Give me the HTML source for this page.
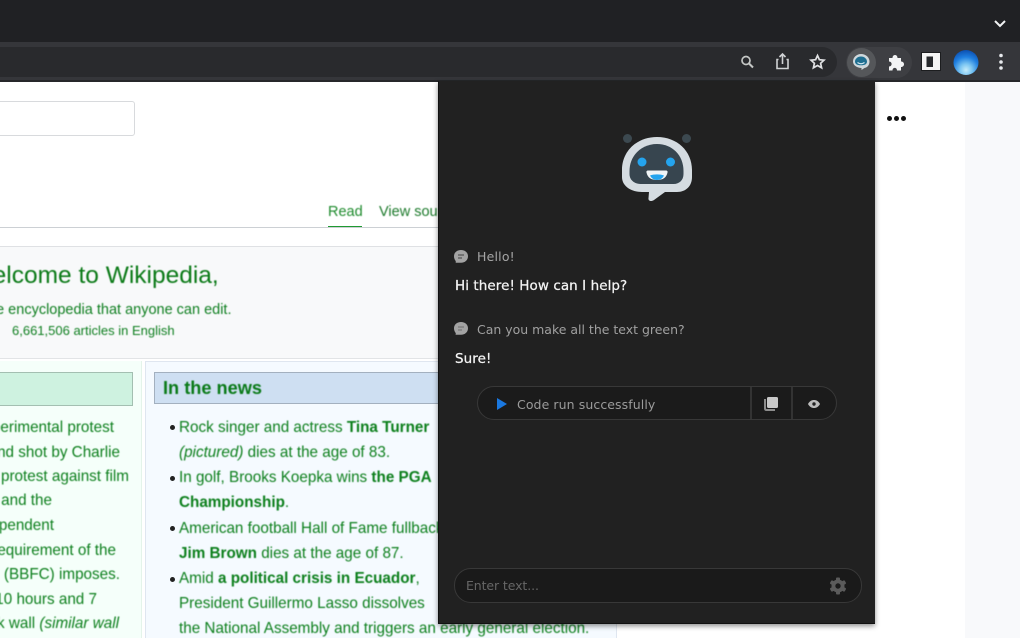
<!DOCTYPE html>
<html><head><meta charset="utf-8">
<style>
html,body{margin:0;padding:0;width:1020px;height:638px;overflow:hidden;background:#fff}
#r{position:relative;width:1020px;height:638px;overflow:hidden;font-family:"Liberation Sans",sans-serif}
.a{position:absolute}
.t{position:absolute;white-space:nowrap;color:#0c7f1c;font-size:14.5px;line-height:18px;filter:blur(.4px)}
.n{font-size:15.25px}
.p{position:absolute;white-space:nowrap;font-family:"DejaVu Sans",sans-serif;filter:blur(.35px)}
b{font-weight:bold}
</style></head><body><div id="r">
<!-- browser chrome -->
<div class="a" style="left:0;top:0;width:1020px;height:42px;background:#202124"></div>
<div class="a" style="left:0;top:42px;width:1020px;height:39px;background:#35363a"></div>
<div class="a" style="left:0;top:47px;width:837px;height:30px;background:#292a2d;border-radius:0 15px 15px 0"></div>
<div class="a" style="left:846px;top:47px;width:66px;height:31px;background:#3e3f43;border-radius:16px"></div>
<div class="a" style="left:847px;top:48px;width:29px;height:29px;background:#55575a;border-radius:50%"></div>
<svg class="a" style="left:0;top:0" width="1020" height="82" viewBox="0 0 1020 82">
<path d="M995 21l5 5 5-5" fill="none" stroke="#f1f3f4" stroke-width="2"/>
<circle cx="746" cy="60.500" r="4" fill="none" stroke="#c4c7c5" stroke-width="1.700"/>
<path d="M749 63.500l4 4" stroke="#c4c7c5" stroke-width="2"/>
<path d="M778.500 59.500h-1.500v9h11v-9h-1.500M782.500 64V54.500M779.500 57l3-3 3 3" fill="none" stroke="#d0d2d4" stroke-width="1.600"/>
<path d="M817.500 55.500l1.900 4.200 4.600.5-3.400 3.100 1 4.500-4.100-2.300-4.100 2.300 1-4.500-3.400-3.100 4.600-.5z" fill="none" stroke="#e0e1e3" stroke-width="1.700"/>
<path d="M861 54c5 0 8.500 3.500 8.500 7.500s-2.500 6-5 6.500l-3 2v-2c-4 0-8.500-2.500-8.500-6.500s3.500-7.500 8-7.500z" fill="#cfd8dc"/>
<path d="M861 56.500c3.500 0 6 2.500 6 5 0 2.500-2 3.800-6 3.800s-6-1.300-6-3.800c0-2.500 2.500-5 6-5z" fill="#1f6f91"/>
<path d="M857.500 62.500q3.500 2.500 7 0" stroke="#cfe6f0" stroke-width="1.200" fill="none"/>
<path d="M889 58h3.500c0-4 5-4 5 0h3.500v3.500c4 0 4 5.500 0 5.500v3.500h-4c0-3.500-4.500-3.500-4.500 0h-3.500v-4c3.500 0 3.500-5 0-5z" fill="#f3f4f5"/>
<rect x="921" y="52" width="20" height="19" fill="#1c1d1f"/>
<rect x="922" y="53" width="18" height="17" fill="#f4f4f4"/>
<rect x="926.500" y="56.500" width="6.500" height="10.500" fill="#26282b"/>
<defs><radialGradient id="g" cx=".5" cy=".8" r=".8"><stop offset="0" stop-color="#c5ecfa"/><stop offset=".3" stop-color="#7cc6f2"/><stop offset=".65" stop-color="#1f7fe0"/><stop offset="1" stop-color="#0c4fb0"/></radialGradient></defs>
<circle cx="966" cy="62.500" r="12.500" fill="url(#g)"/>
<circle cx="1001" cy="55.500" r="1.800" fill="#e8eaed"/><circle cx="1001" cy="62" r="1.800" fill="#e8eaed"/><circle cx="1001" cy="68" r="1.800" fill="#e8eaed"/>
</svg>
<div class="a" style="left:0;top:80px;width:1020px;height:2px;background:#26272a"></div>

<!-- wikipedia page -->
<div class="a" style="left:965px;top:82px;width:55px;height:556px;background:#f8f9fb"></div>
<div class="a" style="left:-10px;top:101px;width:143px;height:33px;border:1.500px solid #d8dadd;border-radius:3px;background:#fff"></div>
<div class="t" style="left:328px;top:203px;color:#1d8a2c">Read</div>
<div class="a" style="left:328px;top:226px;width:34px;height:2px;background:#1f9a32"></div>
<div class="t" style="left:379px;top:203px;color:#1d7a2c">View source</div>
<div class="a" style="left:0;top:227px;width:440px;height:1px;background:#ccd0d4"></div>
<div class="a" style="left:0;top:246px;width:617px;height:111px;background:#f8f9fa;border-top:1px solid #dfe1e4;border-bottom:1px solid #e2e4e6"></div>
<div class="t" style="left:-30px;top:261px;font-size:24.500px;line-height:30px;color:#0b7a17">Welcome to Wikipedia,</div>
<div class="t" style="left:-16px;top:301px;color:#0f7f20">the encyclopedia that anyone can edit.</div>
<div class="t" style="left:12px;top:322px;font-size:13px;color:#0f7f20">6,661,506 articles in English</div>

<div class="a" style="left:0;top:361px;width:141px;height:277px;background:#f5fffa;border-right:1px solid #e4f4ea"></div>
<div class="a" style="left:-5px;top:372px;width:136px;height:32px;background:#cef2e0;border:1px solid #a3bfb1"></div>
<div class="a" style="left:145px;top:361px;width:470px;height:277px;background:#f5faff;border:1px solid #dfe6f0;border-bottom:0"></div>
<div class="a" style="left:154px;top:372px;width:300px;height:32px;background:#cedff2;border:1px solid #a3b0bf;box-sizing:border-box"></div>
<div class="t" style="left:163px;top:376px;font-size:18.200px;line-height:24px;font-weight:bold;color:#0a7a18">In the news</div>

<div class="t n" style="right:906px;top:419px">experimental protest</div>
<div class="t n" style="right:900px;top:444px">and shot by Charlie</div>
<div class="t n" style="right:891px;top:468px">protest against film</div>
<div class="t n" style="right:968px;top:492px">and the</div>
<div class="t n" style="right:966px;top:517px">Independent</div>
<div class="t n" style="right:904px;top:542px">requirement of the</div>
<div class="t n" style="right:900px;top:566px">(BBFC) imposes.</div>
<div class="t n" style="right:923px;top:591px">10 hours and 7</div>
<div class="t n" style="right:901px;top:615px">brick wall <i>(similar wall</i></div>

<div class="a" style="left:170px;top:425px;width:5px;height:5px;border-radius:50%;background:#222"></div>
<div class="a" style="left:170px;top:476px;width:5px;height:5px;border-radius:50%;background:#222"></div>
<div class="a" style="left:170px;top:526px;width:5px;height:5px;border-radius:50%;background:#222"></div>
<div class="a" style="left:170px;top:577px;width:5px;height:5px;border-radius:50%;background:#222"></div>
<div class="t n" style="left:179px;top:419px">Rock singer and actress <b>Tina Turner</b></div>
<div class="t n" style="left:179px;top:444px"><i>(pictured)</i> dies at the age of 83.</div>
<div class="t n" style="left:179px;top:469px">In golf, Brooks Koepka wins <b>the PGA</b></div>
<div class="t n" style="left:179px;top:494px"><b>Championship</b>.</div>
<div class="t n" style="left:179px;top:520px">American football Hall of Fame fullback</div>
<div class="t n" style="left:179px;top:545px"><b>Jim Brown</b> dies at the age of 87.</div>
<div class="t n" style="left:179px;top:570px">Amid <b>a political crisis in Ecuador</b>,</div>
<div class="t n" style="left:179px;top:595px">President Guillermo Lasso dissolves</div>
<div class="t n" style="left:179px;top:620px">the National Assembly and triggers an early general election.</div>
<div class="a" style="left:887px;top:116px;width:5px;height:5px;border-radius:50%;background:#111;box-shadow:7px 0 #111,14px 0 #111"></div>

<!-- popup -->
<div class="a" style="left:438px;top:81px;width:437px;height:543px;background:#212121;box-shadow:0 2px 5px rgba(0,0,0,.45);border-left:1px solid #111;border-bottom:1px solid #111;box-sizing:border-box"></div>
<svg class="a" style="left:610px;top:125px" width="95" height="85" viewBox="610 125 95 85">
<circle cx="627.500" cy="138.500" r="4.500" fill="#3c4950"/>
<circle cx="686.500" cy="138.500" r="4.500" fill="#3c4950"/>
<path d="M657 137c20 0 35 14 35 33v7c0 9-6 15-15 15h-12l-11 8c-3 2-6 1-5.500-2l.5-6h-7c-11 0-20-6-20-15v-7c0-19 15-33 35-33z" fill="#d5dce1"/>
<path d="M657 144c15 0 26.500 11 26.500 27v3c0 6-4 10-10 10h-33c-6 0-11-4-11-10v-3c0-16 12.500-27 27.500-27z" fill="#37454f"/>
<circle cx="642" cy="162" r="4.500" fill="#24a4ee"/>
<circle cx="670.500" cy="162" r="4.500" fill="#24a4ee"/>
<path d="M648 170.500h18c1 0 2 1 1.500 2-1 5-4.500 7.500-10.500 7.500s-9.500-2.500-10.500-7.500c-.5-1 .5-2 1.500-2z" fill="#f0f4f6"/>
<path d="M650 175.500c4-1.500 10-1.500 14 0-1.500 3-4 4.500-7 4.500s-5.500-1.500-7-4.500z" fill="#24a4ee"/>
</svg>

<svg class="a" style="left:450px;top:245px" width="24" height="100" viewBox="450 245 24 100">
<path d="M461 250c4 0 7 2.500 7 6.300s-3 6.500-7 6.500h-6c1 0 1-1 .5-2-1-1.300-1.500-2.800-1.500-4.500 0-3.800 3-6.300 7-6.300z" fill="#a3a3a3"/>
<path d="M458 255h6M458 258h4" stroke="#555" stroke-width="1.200"/>
<path d="M461 322c4 0 7 2.500 7 6.300s-3 6.500-7 6.500h-6c1 0 1-1 .5-2-1-1.300-1.500-2.800-1.500-4.500 0-3.800 3-6.300 7-6.300z" fill="#a3a3a3"/>
<path d="M458 327h6M458 330h4" stroke="#777" stroke-width="1.200"/>
</svg>
<div class="p" style="left:477px;top:249px;font-size:12.500px;line-height:16px;color:#a5a5a5;letter-spacing:.2px">Hello!</div>
<div class="p" style="left:455px;top:277px;font-size:13.500px;line-height:18px;color:#f4f4f4;letter-spacing:.07px;-webkit-text-stroke:.25px #f4f4f4">Hi there! How can I help?</div>
<div class="p" style="left:477px;top:322px;font-size:12.500px;line-height:16px;color:#a0a0a0;letter-spacing:-.01px">Can you make all the text green?</div>
<div class="p" style="left:455px;top:350px;font-size:13.500px;line-height:18px;color:#f4f4f4;letter-spacing:.07px;-webkit-text-stroke:.25px #f4f4f4">Sure!</div>

<div class="a" style="left:477px;top:386px;width:360px;height:34px;box-sizing:border-box;background:#1b1b1b;border:1px solid #383838;border-radius:17px"></div>
<div class="a" style="left:750px;top:387px;width:2px;height:32px;background:#333"></div>
<div class="a" style="left:791px;top:387px;width:2px;height:32px;background:#333"></div>
<svg class="a" style="left:490px;top:390px" width="340" height="28" viewBox="490 390 340 28">
<path d="M497 398l10 6-10 6z" fill="#1a78e0"/>
<rect x="767" y="397" width="11" height="11" rx="1.500" fill="#c9c9c9"/>
<path d="M765 399v9.500c0 1 .6 1.500 1.500 1.500H775" fill="none" stroke="#8d8d8d" stroke-width="2"/>
<path d="M808 404c1.500-2.800 3.500-4 6-4s4.500 1.200 6 4c-1.500 2.800-3.500 4-6 4s-4.500-1.200-6-4z" fill="#bdbdbd"/>
<circle cx="814" cy="404" r="1.700" fill="#222"/>
</svg>
<div class="p" style="left:517px;top:397px;font-size:12.500px;line-height:16px;color:#9b9b9b;letter-spacing:.09px">Code run successfully</div>

<div class="a" style="left:454px;top:568px;width:408px;height:35px;box-sizing:border-box;background:#1a1a1a;border:1px solid #383838;border-radius:17px"></div>
<div class="p" style="left:466px;top:578px;font-size:12.500px;line-height:16px;color:#666;letter-spacing:-.1px">Enter text...</div>
<svg class="a" style="left:826px;top:574px" width="24" height="24" viewBox="0 0 24 24">
<g fill="#5b5b5b"><circle cx="12" cy="12" r="6.500"/>
<rect x="10" y="3.500" width="4" height="17" rx="1"/>
<rect x="10" y="3.500" width="4" height="17" rx="1" transform="rotate(60 12 12)"/>
<rect x="10" y="3.500" width="4" height="17" rx="1" transform="rotate(120 12 12)"/></g>
<circle cx="12" cy="12" r="2.700" fill="#1a1a1a"/>
</svg>
</div></body></html>
